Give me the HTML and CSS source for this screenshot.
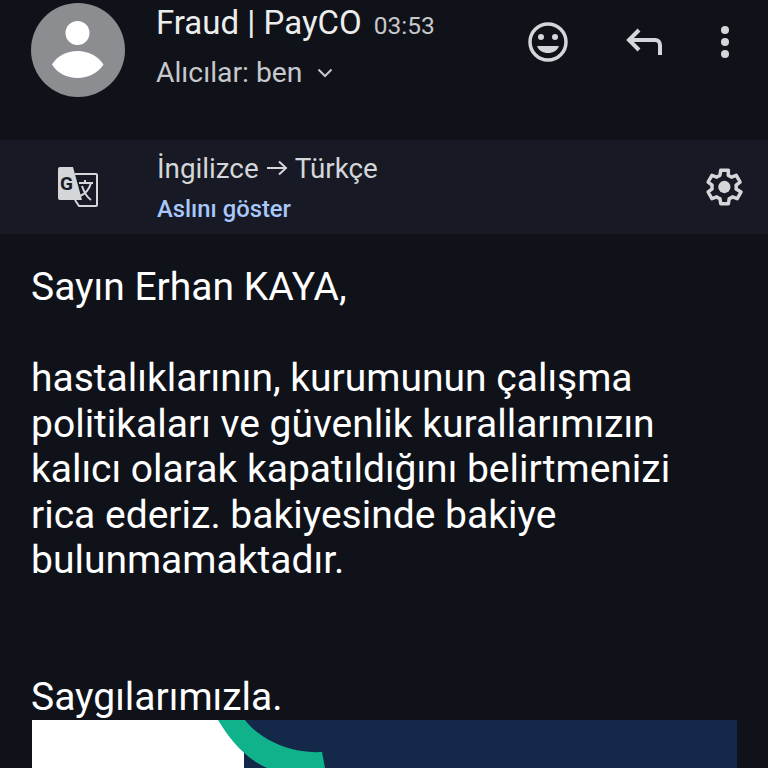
FILE: index.html
```html
<!DOCTYPE html>
<html lang="tr">
  <head>
    <meta charset="UTF-8" />
    <title>Fraud | PayCO</title>
    <link rel="stylesheet" href="styles.css">
  </head>
  <body>
    <div class="header">
      <svg class="avatar" viewBox="0 0 94 94">
        <circle cx="47" cy="47" r="47" fill="#8b8d91" />
        <circle cx="46.500" cy="30" r="12" fill="#fff" />
        <path d="M21 61.500C26 53 36 48 46.500 48S67 53 72.500 61.500C67 70 57 75 46.500 75S26 70 21 61.500z" fill="#fff" />
      </svg>
      <div class="sender">
        <div class="sender-line">
          <span class="sender-name">Fraud | PayCO</span>
          <span class="sender-time">03:53</span>
        </div>
        <div class="recipients">
          Alıcılar: ben
          <svg class="chevron" viewBox="0 0 16 10">
            <path d="M1.500 1.500L8 8l6.500-6.500" fill="none" stroke="#c6c8cc" stroke-width="2" />
          </svg>
        </div>
      </div>
      <div class="header-icons">
        <svg class="icon-smile" viewBox="0 0 40 40">
          <circle cx="20" cy="20" r="18" fill="none" stroke="#d4d6d9" stroke-width="3.500" />
          <circle cx="13" cy="15" r="3" fill="#d4d6d9" />
          <circle cx="27" cy="15" r="3" fill="#d4d6d9" />
          <path d="M9 24h22c-1.500 4.500-6 7-11 7s-9.500-2.500-11-7z" fill="#d4d6d9" />
        </svg>
        <svg class="icon-reply" viewBox="0 0 36 28">
          <path d="M13 2L3 12l10 10M3 12h26c3 0 5 2 5 5v10" fill="none" stroke="#d4d6d9" stroke-width="4" />
        </svg>
        <svg class="icon-more" viewBox="0 0 10 34">
          <circle cx="5" cy="5" r="4" fill="#d4d6d9" />
          <circle cx="5" cy="17" r="4" fill="#d4d6d9" />
          <circle cx="5" cy="29" r="4" fill="#d4d6d9" />
        </svg>
      </div>
    </div>

    <div class="translate-bar">
      <svg class="icon-translate" viewBox="0 0 40 40">
        <path d="M17 7h21a1 1 0 0 1 1 1v30a1 1 0 0 1-1 1H21l-4-6" fill="none" stroke="#d4d6d9" stroke-width="2" />
        <path d="M2 0h13l9 33H2a2 2 0 0 1-2-2V2a2 2 0 0 1 2-2z" fill="#d4d6d9" />
        <text x="2" y="23" class="translate-g">G</text>
        <path d="M21 16h14M27 13v3M33 16c-2 7-6 11-11 13M24 19c2 6 6 12 9 14" fill="none" stroke="#d4d6d9" stroke-width="2" />
      </svg>
      <div class="translate-text">
        <div class="translate-langs">
          İngilizce
          <svg class="icon-arrow" viewBox="0 0 22 16">
            <path d="M1 8h19M13 1.500L20 8l-7 6.500" fill="none" stroke="#d4d6d9" stroke-width="2" />
          </svg>
          Türkçe
        </div>
        <div class="translate-link">Aslını göster</div>
      </div>
      <svg class="icon-gear" viewBox="0 0 24 24">
        <path d="M19.400 13a7.600 7.600 0 0 0 0-2l2.100-1.600-2-3.500-2.500 1a7.500 7.500 0 0 0-1.700-1L15.400 3.300h-4l-.4 2.600a7.500 7.500 0 0 0-1.700 1l-2.500-1-2 3.500L6.900 11a7.600 7.600 0 0 0 0 2l-2.100 1.600 2 3.500 2.500-1a7.500 7.500 0 0 0 1.700 1l.4 2.600h4l.4-2.600a7.500 7.500 0 0 0 1.700-1l2.500 1 2-3.500z" transform="translate(-1.100 0)" fill="none" stroke="#d4d6d9" stroke-width="1.800" stroke-linejoin="round" />
        <circle cx="12.200" cy="12" r="3.200" fill="#d4d6d9" />
      </svg>
    </div>

    <div class="message">
      <p class="message-text">Sayın Erhan KAYA,<br><br>hastalıklarının, kurumunun çalışma<br>politikaları ve güvenlik kurallarımızın<br>kalıcı olarak kapatıldığını belirtmenizi<br>rica ederiz. bakiyesinde bakiye<br>bulunmamaktadır.<br><br><br>Saygılarımızla.</p>
      <div class="banner">
        <div class="banner-white"></div>
        <svg class="banner-arc" viewBox="0 0 140 48">
          <path d="M18 0H45C56 15 85 34 122 32L125 48H67C45 38 30 20 18 0z" fill="#0fb28a" />
        </svg>
      </div>
    </div>
  </body>
</html>
```

FILE: styles.css
```css
html,
body {
  height: 768px;
  overflow: hidden;
}
body {
  font-family: Roboto, sans-serif;
  margin: 0;
  background-color: #10121a;
  color: #fff;
}
.header {
  display: flex;
  height: 140px;
  padding: 3px 38px 0 31px;
  box-sizing: border-box;
}
.avatar {
  width: 94px;
  height: 94px;
  flex: none;
}
.sender {
  margin-left: 31px;
  flex: 1;
}
.sender-line {
  display: flex;
  align-items: baseline;
  gap: 12px;
  height: 40px;
}
.sender-name {
  font-size: 33px;
  color: #eceded;
}
.sender-time {
  font-size: 24.500px;
  color: #c6c8cc;
}
.recipients {
  display: flex;
  align-items: center;
  gap: 15px;
  margin-top: 13px;
  font-size: 28.300px;
  color: #c6c8cc;
}
.chevron {
  width: 16px;
  height: 10px;
}
.header-icons {
  display: flex;
  align-items: center;
  height: 78px;
  gap: 58px;
}
.icon-smile {
  width: 40px;
  height: 40px;
}
.icon-reply {
  width: 36px;
  height: 28px;
}
.icon-more {
  width: 10px;
  height: 34px;
}
.translate-bar {
  display: flex;
  align-items: center;
  height: 94px;
  padding: 0 21px 0 58px;
  background-color: #171a24;
}
.icon-translate {
  width: 40px;
  height: 40px;
  flex: none;
}
.translate-g {
  font-family: Roboto, sans-serif;
  font-size: 19px;
  font-weight: 700;
  fill: #171a24;
}
.translate-text {
  margin-left: 59px;
  flex: 1;
}
.translate-langs {
  display: flex;
  align-items: center;
  gap: 7px;
  font-size: 27.800px;
  color: #d4d6d9;
}
.icon-arrow {
  width: 22px;
  height: 16px;
}
.translate-link {
  margin-top: 10px;
  font-size: 23.800px;
  font-weight: 500;
  color: #a8c7fa;
}
.icon-gear {
  width: 46px;
  height: 46px;
  flex: none;
}
.message {
  padding: 31px 31px 0 32px;
}
.message-text {
  margin: 0 0 0 -1px;
  font-size: 39px;
  line-height: 45.500px;
}
.banner {
  position: relative;
  display: flex;
  height: 48px;
  background-color: #14284a;
}
.banner-white {
  width: 212px;
  background-color: #fff;
}
.banner-arc {
  position: absolute;
  left: 168px;
  top: 0;
  width: 140px;
  height: 48px;
}
```
